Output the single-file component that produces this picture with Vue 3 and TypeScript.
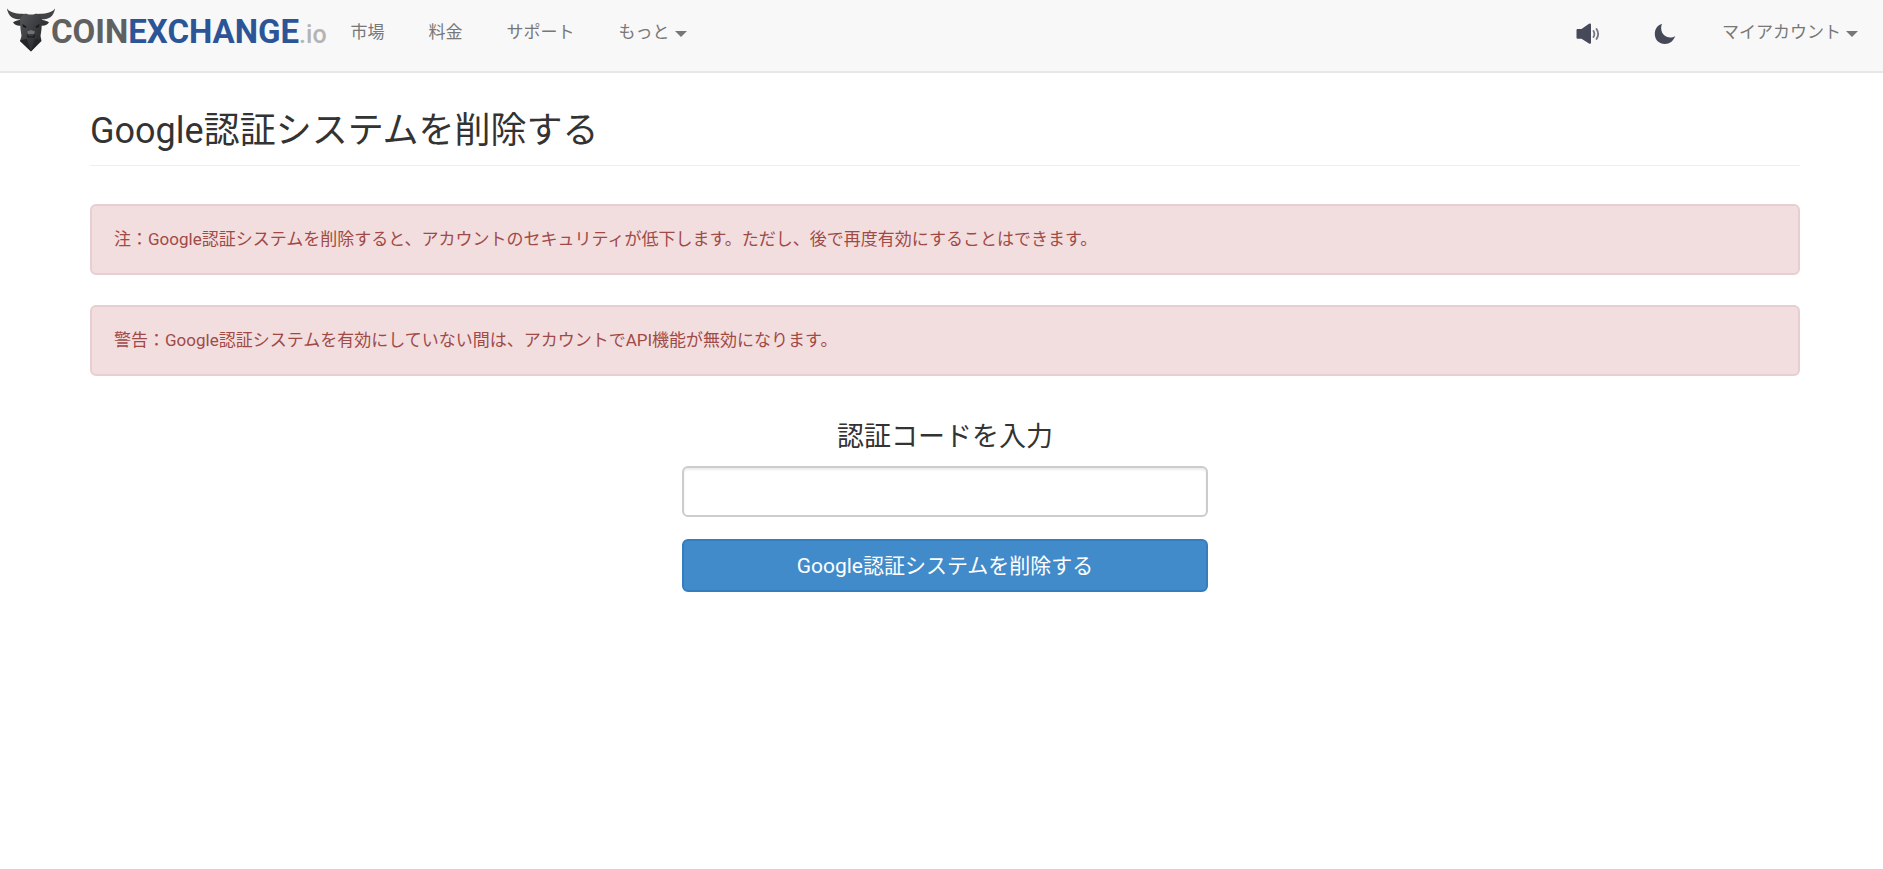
<script setup lang="ts">
import { ref } from 'vue'

interface NavItem {
  label: string
  menu?: boolean
}

const items: NavItem[] = [
  { label: '市場' },
  { label: '料金' },
  { label: 'サポート' },
  { label: 'もっと', menu: true },
]

const alerts: string[] = [
  '注：Google認証システムを削除すると、アカウントのセキュリティが低下します。ただし、後で再度有効にすることはできます。',
  '警告：Google認証システムを有効にしていない間は、アカウントでAPI機能が無効になります。',
]

const code = ref('')
</script>

<template>
  <div class="page">
    <header class="navbar">
      <a class="brand" href="#">
        <svg class="bull" viewBox="0 0 48 44" aria-hidden="true">
          <defs>
            <linearGradient id="hide" x1="0" y1="0" x2="1" y2="1">
              <stop offset="0" stop-color="#55575a" />
              <stop offset="0.5" stop-color="#3c3d40" />
              <stop offset="1" stop-color="#202124" />
            </linearGradient>
          </defs>
          <path
            fill="#414246"
            d="M0 0.500C2 3.500 5.500 4.800 10 5.500C14 6 17 5.800 18.500 6L16 11.500C10 12 5 10.500 2.800 7.500C1.200 5.200 0.300 3 0 0.500ZM48 0.500C46 3.500 42.500 4.800 38 5.500C34 6 31 5.800 29.500 6L32 11.500C38 12 43 10.500 45.200 7.500C46.800 5.200 47.700 3 48 0.500Z"
          />
          <path
            fill="#333437"
            d="M15 11.500C11.500 12 8.500 12.500 6 14.200C7.500 17 10.500 18.300 15 17.500ZM33 11.500C36.500 12 39.500 12.500 42 14.200C40.500 17 37.500 18.300 33 17.500Z"
          />
          <path
            fill="url(#hide)"
            d="M17 6C20 5.300 21.500 7 24 6.500C26.500 7 28 5.300 31 6L35 11L34.500 21L33.500 28L34.500 33L24 43.500L13 33L14.500 28L13.500 21L13 11Z"
          />
          <path fill="#18191b" d="M15.500 16L19.500 18.500L19 20L16 19ZM32.500 16L28.500 18.500L29 20L32 19ZM20 26L22 28.500H26L28 26L27.500 29.500H20.500Z" />
          <path fill="#707276" d="M20 23.500L24 22L28 23.500L27 26H21Z" />
          <path fill="#242528" d="M14 32L20 31L24 43.500L13 33ZM34 32L28 31L24 43.500Z" />
        </svg>
        <span class="wordmark">
          <span class="coin">COIN</span><span class="exchange">EXCHANGE</span><span class="tld">.io</span>
        </span>
      </a>
      <nav class="links">
        <a v-for="item in items" :key="item.label" href="#" class="link">
          {{ item.label }}<i v-if="item.menu" class="caret"></i>
        </a>
      </nav>
      <div class="tools">
        <button type="button" class="tool" aria-label="サウンド">
          <svg width="24" height="22" viewBox="0 0 24 22" aria-hidden="true">
            <path fill="#464958" d="M1.500 6H5.500L13 0.800Q15 0 15 1.800V19.600Q15 21.500 13 20.500L5.500 15.800H1.500Q0.500 15.800 0.500 14.800V7Q0.500 6 1.500 6Z" />
            <path fill="none" stroke="#737581" stroke-width="1.800" stroke-linecap="round" d="M17.500 8Q19.300 11 17.500 14M20.500 6Q23.800 11 20.500 16" />
          </svg>
        </button>
        <button type="button" class="tool" aria-label="ナイトモード">
          <svg width="22" height="22" viewBox="0 0 22 22" aria-hidden="true">
            <path fill="#464958" d="M8 0.800C5.500 6.500 8.500 14.500 16 14.500C18 14.500 19.800 14 21.200 13C19.500 18 15.500 21 11 21C5 21 0.800 16.800 0.800 11C0.800 6 3.500 2.200 8 0.800Z" />
          </svg>
        </button>
        <a href="#" class="link">マイアカウント<i class="caret"></i></a>
      </div>
    </header>

    <main class="content">
      <h1 class="title">Google認証システムを削除する</h1>
      <p v-for="text in alerts" :key="text" class="alert" role="alert">{{ text }}</p>
      <form class="form" @submit.prevent>
        <label class="label" for="code">認証コードを入力</label>
        <input id="code" v-model="code" class="field" type="text" autocomplete="off" />
        <button class="submit" type="submit">Google認証システムを削除する</button>
      </form>
    </main>
  </div>
</template>

<style>
body {
  margin: 0;
  background: #fff;
}
</style>

<style scoped>
.page,
.page button,
.page input {
  font-family: Roboto, "Noto Sans CJK JP", sans-serif;
}

.page {
  color: #333;
  font-size: 17px;
  line-height: 24px;
}

.page * {
  box-sizing: border-box;
}

.navbar {
  display: flex;
  align-items: center;
  height: 73px;
  padding: 0 25px 8px 7px;
  background: #f8f8f8;
  border-bottom: 2px solid #e7e7e7;
}

.brand {
  display: flex;
  align-items: flex-start;
  padding-top: 4px;
  font-weight: 700;
  font-size: 33px;
  line-height: 48px;
  text-decoration: none;
}

.bull {
  width: 48px;
  height: 44px;
  margin-right: -4px;
}

.wordmark {
  display: flex;
  align-items: baseline;
}

.coin {
  color: #606060;
}

.exchange {
  color: #2b5597;
}

.tld {
  color: #b4b4b4;
  font-size: 25px;
  font-weight: 500;
}

.links {
  display: flex;
  gap: 44px;
  margin-left: 24px;
}

.link {
  display: flex;
  align-items: center;
  color: #777;
  text-decoration: none;
  white-space: nowrap;
}

.caret {
  margin: 4px 0 0 5px;
  border-top: 6px solid #777;
  border-left: 6px solid transparent;
  border-right: 6px solid transparent;
}

.tools {
  display: flex;
  align-items: center;
  margin-left: auto;
}

.tool {
  display: flex;
  margin: 4px 54px 0 0;
  padding: 0;
  border: 0;
  background: none;
}

.tool + .link {
  margin-left: -8px;
}

.content {
  padding: 35px 83px 0 90px;
}

.title {
  margin: 0 0 38px;
  padding-bottom: 11px;
  border-bottom: 1px solid #eee;
  font-weight: 400;
  font-size: 36px;
  line-height: 46px;
}

.alert {
  margin: 0 0 30px;
  padding: 21px 22px 22px;
  border: 2px solid #e8ced2;
  border-radius: 6px;
  background: #f2dede;
  color: #a04a48;
}

.form {
  display: flex;
  flex-direction: column;
  width: 526px;
  max-width: 100%;
  margin: 44px auto 0;
}

.label {
  margin-bottom: 12px;
  font-size: 27px;
  line-height: 34px;
  text-align: center;
}

.field {
  height: 51px;
  margin-bottom: 22px;
  padding: 8px 16px;
  border: 2px solid #ccc;
  border-radius: 6px;
  box-shadow: inset 0 2px 2px rgba(0, 0, 0, 0.08);
  background: #fff;
  font-size: 21px;
}

.submit {
  height: 53px;
  padding: 0 16px 3px;
  border: 2px solid #357ebd;
  border-radius: 6px;
  background: #428bca;
  color: #fff;
  font-size: 21px;
}
</style>
